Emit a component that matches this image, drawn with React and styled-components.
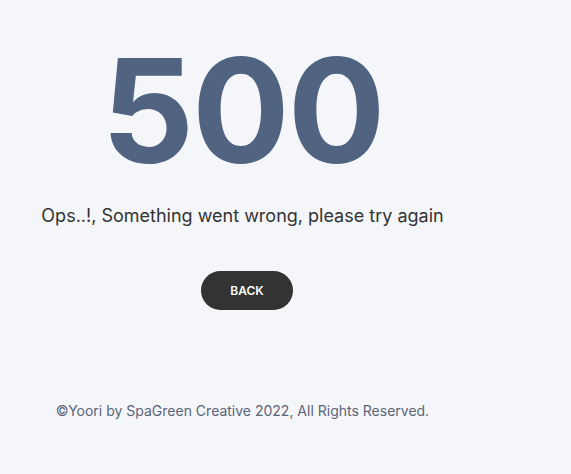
import React from 'react'
import styled, { createGlobalStyle } from 'styled-components'

const GlobalStyle = createGlobalStyle`
  html, body {
    margin: 0;
    padding: 0;
    background: #f5f6fa;
    font-family: Inter, "Noto Sans", sans-serif;
  }
`

const Page = styled.div`
  width: 571px;
  height: 474px;
  display: flex;
  background: #f5f6fa;
`

const Column = styled.div`
  width: 485px;
  display: flex;
  flex-direction: column;
  align-items: center;
  padding-top: 36px;
`

const Code = styled.h1`
  margin: 0;
  font-size: 145px;
  font-weight: 700;
  line-height: 150px;
  color: #506482;
  letter-spacing: -2px;
`

const Message = styled.p`
  margin: 18px 0 0;
  font-size: 18px;
  line-height: 24px;
  color: #333333;
`

const BackButton = styled.a`
  margin-top: 43px;
  margin-left: 9px;
  width: 92px;
  height: 39px;
  border-radius: 20px;
  background: #333333;
  color: #ffffff;
  font-size: 12px;
  font-weight: 600;
  display: flex;
  align-items: center;
  justify-content: center;
  text-decoration: none;
`

const Footer = styled.p`
  margin: 91px 0 0;
  font-size: 14px;
  line-height: 20px;
  color: #5b6479;
`

export default function App() {
  return (
    <Page>
      <GlobalStyle />
      <Column>
        <Code>500</Code>
        <Message>Ops..!, Something went wrong, please try again</Message>
        <BackButton href="#">BACK</BackButton>
        <Footer>©Yoori by SpaGreen Creative 2022, All Rights Reserved.</Footer>
      </Column>
    </Page>
  )
}
